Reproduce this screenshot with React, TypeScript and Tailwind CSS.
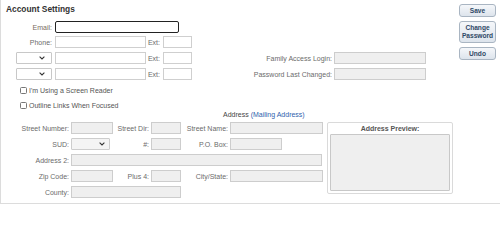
import React from "react";

const lbl = "text-[7px] leading-none text-[#6b6b6b] text-right whitespace-nowrap";
const inp = "h-[12px] border border-[#cfcfcf] bg-white";
const dis = "h-[12px] border border-[#cdcdcd] bg-[#efefef]";

function Chevron() {
  return (
    <svg width="6" height="4" viewBox="0 0 6 4" className="block">
      <path d="M0.6 0.7 L3 3 L5.4 0.7" fill="none" stroke="#333" strokeWidth="1.1" />
    </svg>
  );
}

function Select({ w, disabled, pr }: { w: string; disabled?: boolean; pr: string }) {
  return (
    <div
      className={`${w} h-[12px] border ${disabled ? "border-[#cdcdcd] bg-[#f4f4f4]" : "border-[#c8c8c8] bg-white"} rounded-[1px] flex items-center justify-end ${pr}`}
    >
      <Chevron />
    </div>
  );
}

function Btn({ children, h }: { children: React.ReactNode; h: string }) {
  return (
    <div
      className={`w-[37px] ${h} border border-[#a9b5c2] rounded-[3px] bg-gradient-to-b from-[#f5f7fa] to-[#dde4ec] flex items-center justify-center text-center text-[6.6px] leading-[8px] font-semibold text-[#2f4866]`}
    >
      {children}
    </div>
  );
}

function Check({ label, mt }: { label: string; mt: string }) {
  return (
    <div className={`flex items-center h-[7px] ${mt} ml-[19px]`}>
      <div className="w-[7px] h-[7px] border border-[#777] rounded-[1.5px] bg-white" />
      <span className="ml-[2px] text-[7px] leading-none text-[#555] whitespace-nowrap">{label}</span>
    </div>
  );
}

export default function App() {
  return (
    <div className="w-[500px] h-[204px] bg-white border-l border-b border-[#dcdcdc] font-['Liberation_Sans',Arial,sans-serif] overflow-hidden">
      <div className="flex">
        <div className="w-[458px]">
          <div className="mt-[5px] h-[9px] pl-[5px] text-[8.4px] leading-[9px] font-bold text-[#333]">
            Account Settings
          </div>
          {/* Email */}
          <div className="flex items-center h-[12px] mt-[7px]">
            <div className={`${lbl} w-[51px] !text-[#7a6c60]`}>Email:</div>
            <div className="ml-[3px] w-[124px] h-[12px] border-[1.5px] border-[#222] rounded-[2px] bg-white" />
          </div>
          {/* Phone */}
          <div className="flex items-center h-[12px] mt-[3px]">
            <div className={`${lbl} w-[51px]`}>Phone:</div>
            <div className={`${inp} ml-[3px] w-[91px]`} />
            <div className={`${lbl} w-[16px] pr-[2px]`}>Ext:</div>
            <div className={`${inp} ml-[1px] w-[29px]`} />
          </div>
          {/* Row 3 */}
          <div className="flex items-center h-[12px] mt-[4px]">
            <div className="ml-[15px]">
              <Select w="w-[36px]" pr="pr-[6px]" />
            </div>
            <div className={`${inp} ml-[3px] w-[91px]`} />
            <div className={`${lbl} w-[16px] pr-[2px]`}>Ext:</div>
            <div className={`${inp} ml-[1px] w-[29px]`} />
            <div className={`${lbl} w-[141px] pr-[1px]`}>Family Access Login:</div>
            <div className={`${dis} ml-[1px] w-[92px]`} />
          </div>
          {/* Row 4 */}
          <div className="flex items-center h-[12px] mt-[4px]">
            <div className="ml-[15px]">
              <Select w="w-[36px]" pr="pr-[6px]" />
            </div>
            <div className={`${inp} ml-[3px] w-[91px]`} />
            <div className={`${lbl} w-[16px] pr-[2px]`}>Ext:</div>
            <div className={`${inp} ml-[1px] w-[29px]`} />
            <div className={`${lbl} w-[141px] pr-[1px]`}>Password Last Changed:</div>
            <div className={`${dis} ml-[1px] w-[92px]`} />
          </div>
          <Check label="I'm Using a Screen Reader" mt="mt-[7px]" />
          <Check label="Outline Links When Focused" mt="mt-[8px]" />
        </div>
        <div className="pt-[4px] flex flex-col gap-[4px]">
          <Btn h="h-[13px]">Save</Btn>
          <Btn h="h-[22px]">
            Change
            <br />
            Password
          </Btn>
          <Btn h="h-[13px]">Undo</Btn>
        </div>
      </div>

      {/* Address heading */}
      <div className="mt-[2px] h-[7px] pl-[222px] text-[7px] leading-[7px] text-[#444] whitespace-nowrap">
        Address <span className="text-[#2f62ad]">(Mailing Address)</span>
      </div>

      <div className="flex mt-[4px]">
        <div className="w-[326px] flex flex-col gap-[4px]">
          {/* Street Number */}
          <div className="flex items-center h-[12px]">
            <div className={`${lbl} w-[68px]`}>Street Number:</div>
            <div className={`${dis} ml-[2px] w-[42px]`} />
            <div className={`${lbl} w-[37px] pr-[1px]`}>Street Dir:</div>
            <div className={`${dis} ml-[1px] w-[30px]`} />
            <div className={`${lbl} w-[48px] pr-[1px]`}>Street Name:</div>
            <div className={`${dis} ml-[1px] w-[93px]`} />
          </div>
          {/* SUD */}
          <div className="flex items-center h-[12px]">
            <div className={`${lbl} w-[68px]`}>SUD:</div>
            <div className="ml-[2px]">
              <Select w="w-[39px]" pr="pr-[4px]" disabled />
            </div>
            <div className={`${lbl} w-[40px] pr-[1px]`}>#:</div>
            <div className={`${dis} ml-[1px] w-[30px]`} />
            <div className={`${lbl} w-[48px] pr-[1px]`}>P.O. Box:</div>
            <div className={`${dis} ml-[1px] w-[52px]`} />
          </div>
          {/* Address 2 */}
          <div className="flex items-center h-[12px]">
            <div className={`${lbl} w-[68px]`}>Address 2:</div>
            <div className={`${dis} ml-[2px] w-[251px]`} />
          </div>
          {/* Zip */}
          <div className="flex items-center h-[12px]">
            <div className={`${lbl} w-[68px]`}>Zip Code:</div>
            <div className={`${dis} ml-[2px] w-[42px]`} />
            <div className={`${lbl} w-[37px] pr-[1px]`}>Plus 4:</div>
            <div className={`${dis} ml-[1px] w-[30px]`} />
            <div className={`${lbl} w-[48px] pr-[1px]`}>City/State:</div>
            <div className={`${dis} ml-[1px] w-[93px]`} />
          </div>
          {/* County */}
          <div className="flex items-center h-[12px]">
            <div className={`${lbl} w-[68px]`}>County:</div>
            <div className={`${dis} ml-[2px] w-[110px]`} />
          </div>
        </div>
        <div className="w-[126px] h-[72px] border border-[#dadada] rounded-[2px] pt-[2px] px-[2px] pb-[2px] flex flex-col">
          <div className="h-[7px] text-[7px] leading-[7px] font-bold text-[#555] text-center whitespace-nowrap">
            Address Preview:
          </div>
          <div className="mt-[2px] h-[57px] border border-[#c8c8c8] rounded-[1px] bg-[#efefef]" />
        </div>
      </div>
    </div>
  );
}
